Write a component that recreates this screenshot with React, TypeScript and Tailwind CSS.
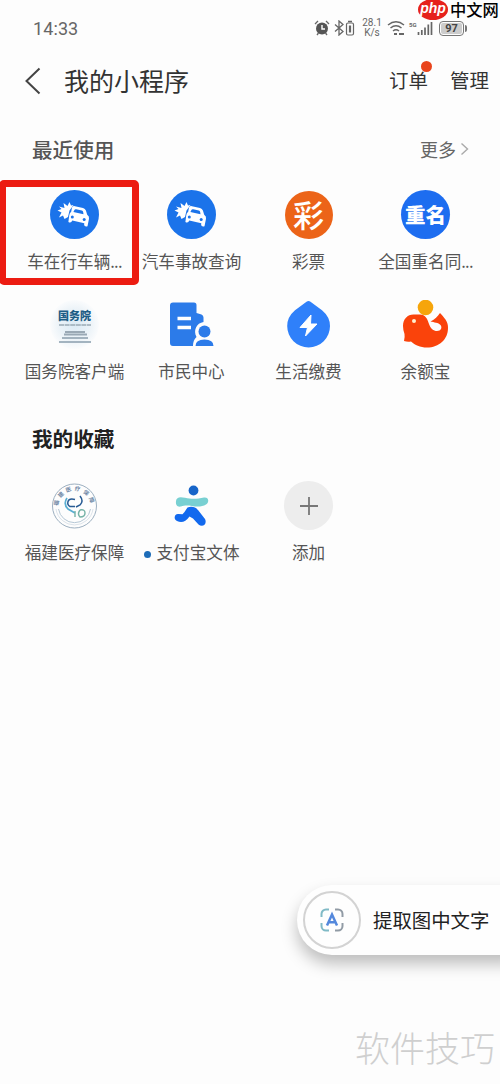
import type { ReactNode } from "react";

function CrashCarIcon() {
  return (
    <svg viewBox="0 0 49 49" className="size-[49px]">
      <circle cx="24.5" cy="24.5" r="24.5" fill="#1b73ea" />
      <path
        d="M9 16.500l5.500 1.500-1-5 4 3 2-4 1.500 3.500 2.500-.5-4 5.500-1.500 6.500-3.500 2-1.500-3.500-4 2 2.500-5-4-2 4-1.500z"
        fill="#fff"
      />
      <path
        d="M22 17.500q1-1.800 3-1.300l8 1.700q2.200.6 2.900 2.600l1.300 4.200q2.300 1.500 1.800 4l-1.500 7.500q-3.300.8-3.400-1.700l.2-1.300-12-2.800q-1.200 3.200-3.900 1.500l.8-6.500q.3-2.500 2-3.700z"
        fill="#fff"
      />
      <path d="M24.300 20.300q.5-1.300 1.900-1l5.600 1.300q1.200.3 1.400 1.700l.3 2-10.100-2.200z" fill="#1b73ea" />
      <circle cx="22.300" cy="27" r="1.500" fill="#1b73ea" />
      <circle cx="34.200" cy="29.500" r="1.500" fill="#1b73ea" />
    </svg>
  );
}

function LotteryIcon() {
  return (
    <div className="size-[48px] rounded-full bg-[#ec6418] text-white text-[31px] leading-[45px] text-center font-medium">
      彩
    </div>
  );
}

function SameNameIcon() {
  return (
    <div className="size-[49px] rounded-full bg-[#1d6df0] text-white text-[20.5px] leading-[48px] text-center font-black whitespace-nowrap">
      重名
    </div>
  );
}

function CouncilIcon() {
  return (
    <div className="size-[49px] rounded-full bg-[radial-gradient(circle,#dcebf5_0%,#ecf3f8_45%,#fbfcfd_72%)] flex flex-col items-center">
      <span className="mt-[7px] text-[11px] leading-[16px] font-black text-[#1d5d86] whitespace-nowrap">国务院</span>
      <svg viewBox="0 0 34 22" className="w-[34px] h-[22px]">
        <path d="M1 2h32" stroke="#9aaab5" strokeWidth="1.300" strokeDasharray="5 .6" />
        <path d="M7 9h20M6 11.500h23" stroke="#9aa9b5" strokeWidth="1.800" />
        <path d="M4 15h26" stroke="#a3b3bf" strokeWidth="2" />
        <path d="M1 19h32" stroke="#9aacb9" strokeWidth="1.800" />
      </svg>
    </div>
  );
}

function CitizenIcon() {
  return (
    <svg viewBox="0 0 49 49" className="size-[49px]">
      <path
        d="M6 2.500h21a2.500 2.500 0 0 1 2.500 2.500v8l5 1.500q2 .8 2 3v4.500c-7 1-10.500 8.500-7 15-2.300 2-3.500 5-3.500 9H6a3 3 0 0 1-3-3V5.500a3 3 0 0 1 3-3z"
        fill="#2c7be9"
      />
      <path d="M10.500 18.500h13.500M10.500 27.500h13.500" stroke="#fff" strokeWidth="3.600" />
      <circle cx="37.500" cy="31.500" r="6" fill="#2c7be9" />
      <path d="M28.500 46q0-6.500 9-6.500t9 6.500z" fill="#2c7be9" />
    </svg>
  );
}

function UtilitiesIcon() {
  return (
    <svg viewBox="0 0 49 49" className="size-[49px]">
      <path
        d="M22.500 1.800q2-1.500 4 0l11.500 8.500Q46 17 46 26a21.400 21.400 0 0 1-42.800 0Q3.200 17 11 10.300z"
        fill="#2f80fa"
      />
      <path d="M27 15L16 27.500h7.500L21.500 36l11.500-12h-6.500z" fill="#fff" stroke="#fff" strokeWidth="1" strokeLinejoin="round" />
    </svg>
  );
}

function YuebaoIcon() {
  return (
    <svg viewBox="0 0 49 49" className="size-[49px]">
      <circle cx="24.500" cy="7.500" r="7.800" fill="#f6a50b" />
      <path
        d="M2 26C2 19 6.500 14.500 12.500 14.500H19C24.500 14.500 26.500 19 28 24C29.500 28.500 32.500 31 36 31C40 31 41.500 27.500 39.500 25C37.500 22.500 33 22.500 29.500 21.500C34 19.500 36.500 16.500 39 13C41 15 42.500 17 44.500 19.500C46.500 22.500 47 25 47 28C47 39.500 38 47.500 26 47.500C19 47.500 14 45 10 41.500C7.500 41.800 5.500 41.800 3 41Q4 37 3.500 34Q2 30 2 26z"
        fill="#fa430b"
      />
      <circle cx="13" cy="21" r="2" fill="#fff0d0" />
    </svg>
  );
}

function FujianIcon() {
  return (
    <svg viewBox="0 0 49 49" className="size-[49px]" fill="none">
      <defs>
        <path id="seal-arc" d="M8 26a16.500 16.500 0 0 1 33 0" />
      </defs>
      <circle cx="24.500" cy="25" r="22" stroke="#9cafc0" strokeWidth="1" />
      <path d="M8.500 28a16.200 16.200 0 0 0 32 0" stroke="#b6c8d6" strokeWidth="1" />
      <path d="M6 28a18.700 18.700 0 0 0 37 0" stroke="#d3dce4" strokeWidth=".8" />
      <text fontSize="5.500" fill="#6f87a5" fontWeight="700" textLength="47" lengthAdjust="spacing">
        <textPath href="#seal-arc" startOffset="1">福建医疗保障</textPath>
      </text>
      <path d="M17 17q-4 6 1 11l7 4" stroke="#5aaed2" strokeWidth="1.700" />
      <path d="M25 18.500q-6-1.500-7 2t2 5h5M30 15q4 5 0 9l-4 2" stroke="#285b94" strokeWidth="1.500" />
      <path d="M30 29q5-1 5 3t-5 4q-3-3 0-7M25 30v6" stroke="#74b2a6" strokeWidth="1.400" />
    </svg>
  );
}

function SportsIcon() {
  return (
    <svg viewBox="0 0 49 49" className="size-[49px]" fill="none">
      <circle cx="26.500" cy="9.500" r="4.900" fill="#1765c9" />
      <path
        d="M9 20c.5-4 4-4.500 9-3.200 8 1.800 13 .8 19-.3 5-.8 5.500 5 2 7-4 2.500-9 2.300-14 1.500-5-.8-8-.5-11 .5-4 .8-5.500-2-5-5.500z"
        fill="#78d0d2"
      />
      <path
        d="M20.500 26.500c4-1.500 8-.5 10.500 2.500l7 9c2.500 5-2.500 9-6.500 5.500l-5.500-6-3.500-2c-4 5.500-8 6.500-12.500 4.500-4-2-2.500-7.500 1.500-7l4 .2 2-2.200z"
        fill="#1269ee"
      />
    </svg>
  );
}

function AddIcon() {
  return (
    <div className="size-[49px] rounded-full bg-[#ededed] flex items-center justify-center">
      <svg viewBox="0 0 20 20" className="size-5">
        <path d="M10 1v18M1 10h18" stroke="#777" strokeWidth="1.800" />
      </svg>
    </div>
  );
}

type AppItem = { label: string; icon: ReactNode; dot?: boolean; cut?: boolean };

const recent: AppItem[] = [
  { label: "车在行车辆", icon: <CrashCarIcon />, cut: true },
  { label: "汽车事故查询", icon: <CrashCarIcon /> },
  { label: "彩票", icon: <LotteryIcon /> },
  { label: "全国重名同", icon: <SameNameIcon />, cut: true },
  { label: "国务院客户端", icon: <CouncilIcon /> },
  { label: "市民中心", icon: <CitizenIcon /> },
  { label: "生活缴费", icon: <UtilitiesIcon /> },
  { label: "余额宝", icon: <YuebaoIcon /> },
];

const favorites: AppItem[] = [
  { label: "福建医疗保障", icon: <FujianIcon /> },
  { label: "支付宝文体", icon: <SportsIcon />, dot: true },
  { label: "添加", icon: <AddIcon /> },
];

function AppGrid({ items }: { items: AppItem[] }) {
  return (
    <div className="grid grid-cols-4 px-4">
      {items.map((item) => (
        <div key={item.label} className="h-[110px] flex flex-col items-center">
          <div className="h-[49px] flex items-center">{item.icon}</div>
          <div className="mt-2.5 h-6 flex items-center text-[16.6px] leading-6 text-[#555] whitespace-nowrap">
            {item.dot && <span className="size-[7px] rounded-full bg-[#1d6cb8] mr-1.5 mt-1" />}
            {item.label}
            {item.cut && <span className="tracking-[-0.8px]">...</span>}
          </div>
        </div>
      ))}
    </div>
  );
}

function StatusBar() {
  return (
    <div className="h-14 px-[33px] flex items-center justify-between text-[#666]">
      <span className="font-[Roboto,sans-serif] text-[18px] tracking-[0.1px]">14:33</span>
      <div className="flex items-center">
        <svg viewBox="0 0 16 16" className="size-4" fill="none">
          <circle cx="8" cy="8.500" r="6" fill="#555" />
          <path d="M1 4l3-3M15 4l-3-3M3 15l1.500-2M13 15l-1.500-2" stroke="#666" strokeWidth="1.300" />
          <path d="M8 5v4h3" stroke="#fff" strokeWidth="1.400" />
        </svg>
        <svg viewBox="0 0 22 16" className="ml-1 w-[22px] h-4" fill="none" stroke="#666">
          <path d="M1 4.500l8 7-4 3.500V1l4 3.500-8 7" strokeWidth="1.300" />
          <rect x="12.500" y="3" width="7" height="12" rx="1.500" strokeWidth="1.200" />
          <path d="M14 1.500h4" strokeWidth="1.500" />
          <path d="M16 5.500v7" strokeWidth="2.200" />
        </svg>
        <div className="ml-1 w-6 font-[Roboto,sans-serif] text-[10px] leading-[10px] text-center">
          <div>28.1</div>
          <div>K/s</div>
        </div>
        <svg viewBox="0 0 18 16" className="ml-[3px] w-[18px] h-4" fill="none" stroke="#666" strokeWidth="1.500">
          <path d="M1 5q8-6.500 16 0M3.500 8q5.500-4.500 11 0M6 11q3-2.400 6 0" />
          <path d="M7 14h3M12 14h5" strokeWidth="2" />
        </svg>
        <div className="ml-1 flex">
          <span className="w-2 font-[Roboto,sans-serif] text-[6px] leading-[9px] font-bold">5G</span>
          <svg viewBox="0 0 16 16" className="w-4 h-4" stroke="#666" strokeWidth="1.700">
            <path d="M1.500 12v3M4.800 10v5M8 7.500V15M11.300 4.500V15M14.500 2v13" />
          </svg>
        </div>
        <div className="ml-1.5 w-[25px] h-[15px] rounded-[4px] border-[1.5px] border-[#777] p-px">
          <div className="h-full rounded-[2px] bg-[#ccc] font-[Roboto,sans-serif] text-[11px] leading-[11px] text-[#444] font-bold text-center">
            97
          </div>
        </div>
        <span className="ml-px w-0.5 h-[7px] bg-[#777] rounded-r" />
      </div>
    </div>
  );
}

export default function App() {
  return (
    <div className="relative w-[500px] h-[1084px] overflow-hidden bg-[#fdfdfd] text-[#333] font-['Noto_Sans_CJK_SC',sans-serif]">
      <StatusBar />

      <div className="h-[50px] pl-6 pr-[11px] flex items-center">
        <svg viewBox="0 0 17 28" className="w-[17px] h-7" fill="none">
          <path d="M15.500 1.500L2.500 14l13 12.500" stroke="#444" strokeWidth="2" />
        </svg>
        <h1 className="ml-[23px] text-[25px] leading-[48px] pb-0.5">我的小程序</h1>
        <div className="ml-auto flex gap-[22px] text-[19.5px] pb-0.5">
          <div className="relative">
            订单
            <span className="absolute -right-[4px] -top-[4px] size-[11px] rounded-full bg-[#e9441c]" />
          </div>
          <span>管理</span>
        </div>
      </div>

      <div className="h-[84px] pl-8 pr-[31px] pt-0.5 flex items-center justify-between">
        <h2 className="text-[20.6px] font-medium text-[#555]">最近使用</h2>
        <div className="flex items-center text-[18px] text-[#666]">
          更多
          <svg viewBox="0 0 9 14" className="ml-1 w-[9px] h-3.5" fill="none">
            <path d="M1.500 1.500L7.500 7l-6 5.500" stroke="#aaa" strokeWidth="1.400" />
          </svg>
        </div>
      </div>
      <AppGrid items={recent} />

      <div className="h-[71px] pl-8 pt-3">
        <h2 className="text-[20.6px] leading-8 font-bold text-[#222]">我的收藏</h2>
      </div>
      <AppGrid items={favorites} />

      {/* highlight around the first mini program */}
      <div className="absolute -left-px top-[180px] w-[140px] h-[105px] border-[7px] border-[#ec1c12] rounded-[5px]" />

      {/* floating text extraction button */}
      <div className="absolute left-[297px] top-[885px] w-[220px] h-[70px] rounded-l-full bg-[#fefefe] shadow-[0_9px_16px_rgba(0,0,0,0.25)] flex items-center pl-1.5">
        <div className="size-[58px] rounded-full border-2 border-[#d3d3d3] flex items-center justify-center">
          <svg viewBox="0 0 24 24" className="size-6" fill="none" strokeWidth="2">
            <path d="M9 1.500H6A4.500 4.500 0 0 0 1.500 6v3M1.500 15v3A4.500 4.500 0 0 0 6 22.500h3" stroke="#80bac6" />
            <path d="M15 1.500h3A4.500 4.500 0 0 1 22.500 6v3M22.500 15v3a4.500 4.500 0 0 1-4.500 4.500h-3" stroke="#919ba5" />
            <path d="M7 17.500l5-11 5 11M9 14.200h6" stroke="#5488dc" strokeWidth="2.500" />
          </svg>
        </div>
        <span className="ml-3 text-[19.4px] text-[#222] whitespace-nowrap">提取图中文字</span>
      </div>

      {/* watermarks */}
      <div className="absolute left-[418px] -top-[2px] flex items-center h-[22px]">
        <div className="w-[30px] h-[21px] rounded-[50%] bg-[#e6211c] text-white font-['Liberation_Sans',sans-serif] italic font-bold text-[14px] leading-[18px] text-center">
          php
        </div>
        <span className="ml-[2px] text-[16.3px] leading-[22px] font-medium text-black whitespace-nowrap">中文网</span>
      </div>
      <div className="absolute left-[355px] top-[1021px] text-[35px] leading-[52px] font-light text-[#cfcfcf] whitespace-nowrap">
        软件技巧
      </div>
    </div>
  );
}
